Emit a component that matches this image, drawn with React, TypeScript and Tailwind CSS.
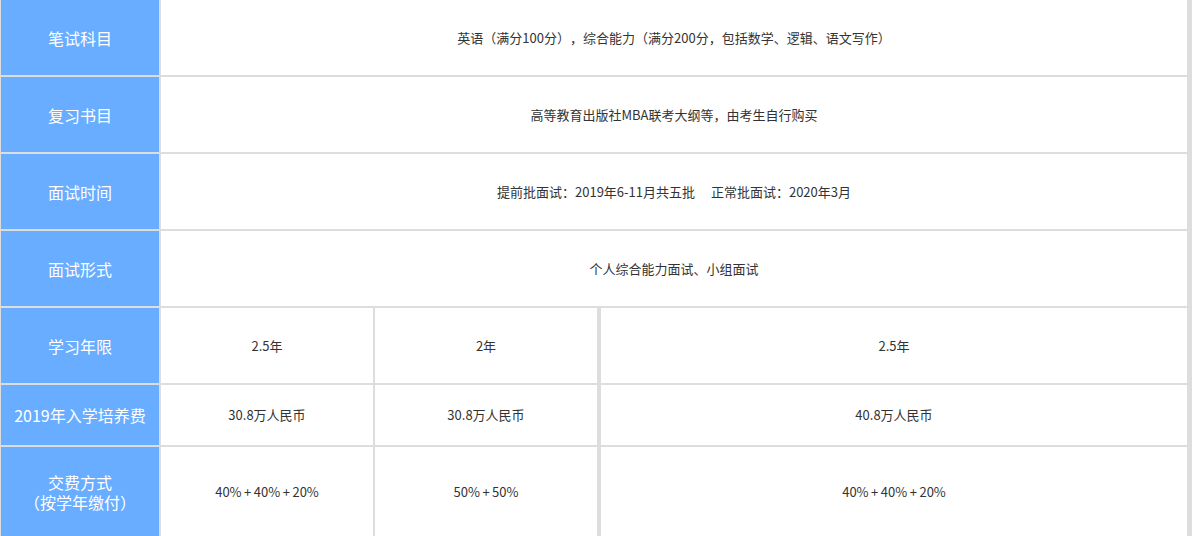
const Label = ({ children, h }: { children: React.ReactNode; h: string }) => (
  <div className={`bg-[#68adff] text-white text-[16px] leading-[20px] flex flex-col items-center justify-center text-center ${h}`}>
    {children}
  </div>
);

const Cell = ({ children, className = '' }: { children: React.ReactNode; className?: string }) => (
  <div className={`bg-white text-[#333] text-[13px] flex items-center justify-center text-center ${className}`}>
    {children}
  </div>
);

const Plus = () => <span className="px-[2.5px]">+</span>;

export default function App() {
  return (
    <div
      className="w-[1192px] bg-[#dddddd] pl-px pr-[5px] [text-spacing-trim:space-all]"
      style={{ fontFamily: '"Noto Sans CJK SC", "Noto Sans", sans-serif' }}
    >
      <div className="grid grid-cols-[158px_212px_222px_588px] gap-x-[2px] gap-y-[2px]">
        <Label h="h-[75px]">笔试科目</Label>
        <Cell className="col-span-3">英语（满分100分），综合能力（满分200分，包括数学、逻辑、语文写作）</Cell>

        <Label h="h-[75px]">复习书目</Label>
        <Cell className="col-span-3">高等教育出版社MBA联考大纲等，由考生自行购买</Cell>

        <Label h="h-[75px]">面试时间</Label>
        <Cell className="col-span-3 whitespace-pre">提前批面试：2019年6-11月共五批　 正常批面试：2020年3月</Cell>

        <Label h="h-[75px]">面试形式</Label>
        <Cell className="col-span-3">个人综合能力面试、小组面试</Cell>

        <Label h="h-[75px]">学习年限</Label>
        <Cell>2.5年</Cell>
        <Cell>2年</Cell>
        <Cell className="border-l-2 border-[#dddddd]">2.5年</Cell>

        <Label h="h-[60px]">2019年入学培养费</Label>
        <Cell>30.8万人民币</Cell>
        <Cell>30.8万人民币</Cell>
        <Cell className="border-l-2 border-[#dddddd]">40.8万人民币</Cell>

        <Label h="h-[90px]">
          <div className="h-[20px]">交费方式</div>
          <div className="h-[20px]">（按学年缴付）</div>
        </Label>
        <Cell>40%<Plus />40%<Plus />20%</Cell>
        <Cell>50%<Plus />50%</Cell>
        <Cell className="border-l-2 border-[#dddddd]">40%<Plus />40%<Plus />20%</Cell>
      </div>
    </div>
  );
}
